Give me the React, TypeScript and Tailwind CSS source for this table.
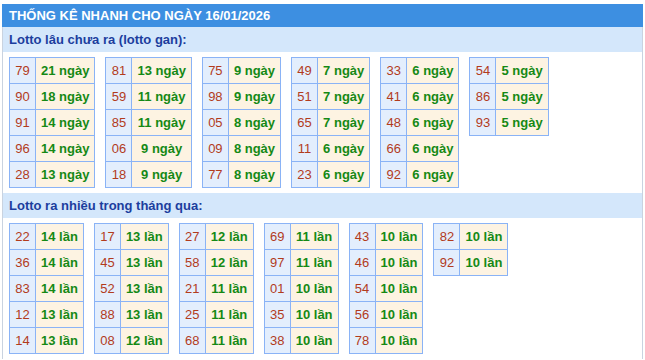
import React from 'react';

type Row = [string, string];

const gan: Row[][] = [
  [['79', '21'], ['90', '18'], ['91', '14'], ['96', '14'], ['28', '13']],
  [['81', '13'], ['59', '11'], ['85', '11'], ['06', '9'], ['18', '9']],
  [['75', '9'], ['98', '9'], ['05', '8'], ['09', '8'], ['77', '8']],
  [['49', '7'], ['51', '7'], ['65', '7'], ['11', '6'], ['23', '6']],
  [['33', '6'], ['41', '6'], ['48', '6'], ['66', '6'], ['92', '6']],
  [['54', '5'], ['86', '5'], ['93', '5']],
];

const nhieu: Row[][] = [
  [['22', '14'], ['36', '14'], ['83', '14'], ['12', '13'], ['14', '13']],
  [['17', '13'], ['45', '13'], ['52', '13'], ['88', '13'], ['08', '12']],
  [['27', '12'], ['58', '12'], ['21', '11'], ['25', '11'], ['68', '11']],
  [['69', '11'], ['97', '11'], ['01', '10'], ['35', '10'], ['38', '10']],
  [['43', '10'], ['46', '10'], ['54', '10'], ['56', '10'], ['78', '10']],
  [['82', '10'], ['92', '10']],
];

const StatTable: React.FC<{ rows: Row[]; unit: string }> = ({ rows, unit }) => (
  <table className="border-collapse border border-[#8ab3f6] self-start">
    <tbody>
      {rows.map(([num, count]) => (
        <tr key={num} className="h-[26px]">
          <td className="border border-[#8ab3f6] bg-[#e3eefd] px-[5px] text-center text-[13px] text-[#b23b1c] w-[26px]">
            {num}
          </td>
          <td className="border border-[#8ab3f6] bg-[#fdf3e2] px-[5px] text-center text-[13px] font-bold text-[#158915]">
            {count} {unit}
          </td>
        </tr>
      ))}
    </tbody>
  </table>
);

const Section: React.FC<{ title: string; data: Row[][]; unit: string }> = ({ title, data, unit }) => (
  <div>
    <div className="h-[25px] bg-[#d4e7fb] pl-[6px] flex items-center text-[13px] font-bold text-[#1c3e9e]">
      {title}
    </div>
    <div className="flex gap-[10px] pl-[6px] py-[5px]">
      {data.map((rows, i) => (
        <StatTable key={i} rows={rows} unit={unit} />
      ))}
    </div>
  </div>
);

export default function App() {
  return (
    <div className="min-h-[360px] bg-white pt-[4px] font-['Liberation_Sans',Arial,sans-serif]">
      <div className="ml-[2px] w-[641px] border-x border-[#c9d3e0]">
        <div className="h-[23px] bg-[#3d8fe1] flex items-center text-[13px] font-bold text-white -mx-px px-[7px]">
          THỐNG KÊ NHANH CHO NGÀY 16/01/2026
        </div>
        <Section title="Lotto lâu chưa ra (lotto gan):" data={gan} unit="ngày" />
        <Section title="Lotto ra nhiều trong tháng qua:" data={nhieu} unit="lần" />
      </div>
    </div>
  );
}
